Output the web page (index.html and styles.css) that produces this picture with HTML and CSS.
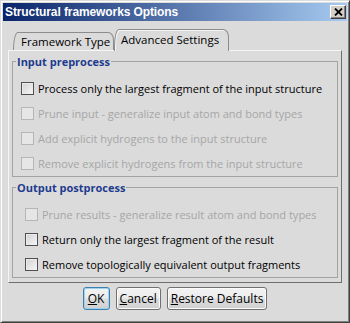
FILE: index.html
```html
<!DOCTYPE html>
<html lang="en">
<head>
    <meta charset="UTF-8">
    <title>Structural frameworks Options</title>
    <link rel="stylesheet" href="styles.css">
</head>
<body>
    <div class="window">
        <div class="titlebar">
            <span class="title">Structural frameworks Options</span>
            <button class="close" aria-label="Close">
                <svg width="9" height="8" viewBox="0 0 9 8">
                    <path d="M1 0.5 L8 7.5 M8 0.5 L1 7.5" stroke="#000" stroke-width="1.8" fill="none"/>
                </svg>
            </button>
        </div>

        <div class="content">
            <div class="tabs">
                <div class="tab">Framework Type</div>
                <div class="tab active">Advanced Settings</div>
            </div>

            <div class="panel">
                <fieldset class="group">
                    <legend>Input preprocess</legend>
                    <div class="rows">
                        <label class="row"><span class="check"></span>Process only the largest fragment of the input structure</label>
                        <label class="row disabled"><span class="check"></span>Prune input - generalize input atom and bond types</label>
                        <label class="row disabled"><span class="check"></span>Add explicit hydrogens to the input structure</label>
                        <label class="row disabled"><span class="check"></span>Remove explicit hydrogens from the input structure</label>
                    </div>
                </fieldset>

                <fieldset class="group output">
                    <legend>Output postprocess</legend>
                    <div class="rows">
                        <label class="row disabled"><span class="check"></span>Prune results - generalize result atom and bond types</label>
                        <label class="row"><span class="check"></span>Return only the largest fragment of the result</label>
                        <label class="row"><span class="check"></span>Remove topologically equivalent output fragments</label>
                    </div>
                </fieldset>
            </div>

            <div class="buttons">
                <button class="btn default"><u>O</u>K</button>
                <button class="btn"><u>C</u>ancel</button>
                <button class="btn"><u>R</u>estore Defaults</button>
            </div>
        </div>
    </div>
</body>
</html>
```

FILE: styles.css
```css
body {
    margin: 0;
    font-family: "Open Sans", sans-serif;
    font-size: 11px;
    color: #000;
}

.window {
    width: 350px;
    height: 323px;
    box-sizing: border-box;
    background-color: #dbdbdb;
    border: 1px solid;
    border-color: #dcdcdc #404040 #404040 #dcdcdc;
    box-shadow: inset 1px 1px #ffffff, inset -1px -1px #808080;
    padding: 2px;
}

.titlebar {
    height: 18px;
    display: flex;
    align-items: center;
    justify-content: space-between;
    padding: 0 1px 0 2px;
    background: linear-gradient(to right, #0a246a, #a6caf0);
}

.title {
    font-family: "Liberation Sans", Arial, sans-serif;
    font-weight: bold;
    font-size: 12px;
    letter-spacing: -0.1px;
    color: #fff;
}

.close {
    width: 16px;
    height: 14px;
    padding: 0;
    display: flex;
    align-items: center;
    justify-content: center;
    background-color: #d4d0c8;
    border: 1px solid;
    border-color: #ffffff #404040 #404040 #ffffff;
    box-shadow: inset -1px -1px #808080;
}

.content {
    padding: 8px 5px 0 5px;
}

/* tabs */

.tabs {
    display: flex;
    align-items: flex-end;
    height: 21px;
    padding-left: 5px;
}

.tab {
    box-sizing: border-box;
    height: 18px;
    width: 101px;
    padding: 1px 0 0 7px;
    font-size: 11.5px;
    line-height: 16px;
    white-space: nowrap;
    border: 1px solid #8c8c8c;
    border-bottom: none;
    border-radius: 5px 6px 0 0 / 17px 8px 0 0;
    background-color: #dbdbdb;
}

.tab.active {
    height: 22px;
    width: 115px;
    padding: 2px 0 0 6px;
    margin-bottom: -1px;
    position: relative;
    z-index: 1;
    box-shadow: inset 1px 1px #f4f4f4;
}

/* panel */

.panel {
    height: 233px;
    box-sizing: border-box;
    border: 1px solid;
    border-color: #f6f6f6 #6e6e6e #6e6e6e #f6f6f6;
    padding: 3px 3px 4px 3px;
}

.group {
    margin: 0;
    padding: 0;
    border: 1px solid #a3a3a3;
}

.group.output {
    margin-top: 3px;
}

.group legend {
    margin-left: 3px;
    padding: 0 1px;
    font-weight: bold;
    font-size: 11px;
    line-height: 15px;
    color: #1f3b8f;
}

.rows {
    padding: 7px 0 0 8px;
}

.output .rows {
    padding-left: 12px;
}

.row {
    display: flex;
    align-items: center;
    gap: 4px;
    height: 25px;
    white-space: nowrap;
}

.check {
    width: 11px;
    height: 11px;
    border: 1px solid #4f4f4f;
    background: linear-gradient(135deg, #d2d2d2, #f6f6f6);
    box-shadow: inset 1px 1px #ececec;
}

.row.disabled {
    color: #a6a6a6;
}

.row.disabled .check {
    border-color: #b6b6b6;
    background: #e6e6e6;
    box-shadow: none;
}

/* buttons */

.buttons {
    display: flex;
    justify-content: center;
    gap: 6px;
    margin-top: 4px;
}

.btn {
    height: 23px;
    padding: 0 3px;
    font-family: "Open Sans", sans-serif;
    font-size: 12px;
    color: #000;
    border: 1px solid #707070;
    border-radius: 3px;
    background: linear-gradient(#f3f3f3 0%, #ececec 48%, #dddddd 52%, #cfcfcf 100%);
    box-shadow: inset 0 0 0 1px #fbfbfb;
}

.btn.default {
    width: 27px;
    border-color: #3c7fb1;
    box-shadow: inset 0 0 0 1px #9fd0ee;
}
```
